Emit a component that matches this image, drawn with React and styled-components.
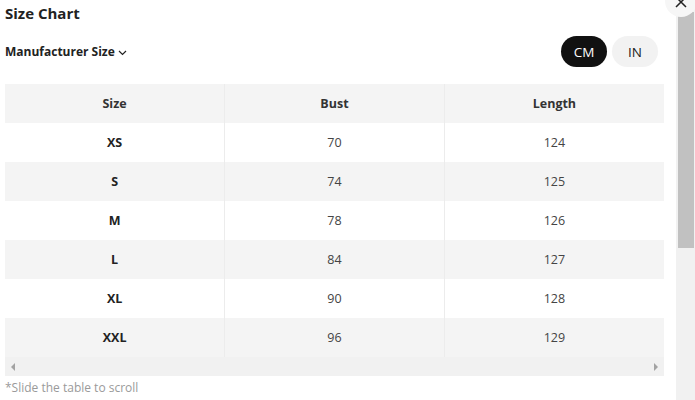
import React, { useState } from "react";
import styled, { createGlobalStyle } from "styled-components";

const GlobalStyle = createGlobalStyle`
  html, body {
    margin: 0;
    padding: 0;
    background: #fff;
  }
  body {
    font-family: "Open Sans", "Noto Sans", sans-serif;
    color: #222;
  }
`;

const rows = [
  { size: "XS", bust: 70, length: 124 },
  { size: "S", bust: 74, length: 125 },
  { size: "M", bust: 78, length: 126 },
  { size: "L", bust: 84, length: 127 },
  { size: "XL", bust: 90, length: 128 },
  { size: "XXL", bust: 96, length: 129 },
];

const App = () => {
  const [unit, setUnit] = useState("CM");

  return (
    <>
      <GlobalStyle />
      <Modal>
        <Body>
          <Title>Size Chart</Title>
          <Toolbar>
            <SizeSelect>
              Manufacturer Size
              <svg width="9" height="6" viewBox="0 0 9 6" fill="none">
                <path d="M1 1l3.5 3.5L8 1" stroke="#222" strokeWidth="1.2" />
              </svg>
            </SizeSelect>
            <Units>
              {["CM", "IN"].map((u) => (
                <UnitButton key={u} $active={unit === u} onClick={() => setUnit(u)}>
                  {u}
                </UnitButton>
              ))}
            </Units>
          </Toolbar>

          <Chart>
            <thead>
              <tr>
                <Head>Size</Head>
                <Head>Bust</Head>
                <Head>Length</Head>
              </tr>
            </thead>
            <tbody>
              {rows.map((r, i) => (
                <Row key={r.size} $striped={i % 2 === 1}>
                  <Cell $bold>{r.size}</Cell>
                  <Cell>{r.bust}</Cell>
                  <Cell>{r.length}</Cell>
                </Row>
              ))}
            </tbody>
          </Chart>

          <HScroll>
            <Arrow $dir="left" />
            <Arrow $dir="right" />
          </HScroll>

          <Note>*Slide the table to scroll</Note>
        </Body>

        <VScroll>
          <Thumb />
        </VScroll>

        <CloseButton aria-label="close">
          <svg width="12" height="12" viewBox="0 0 12 12">
            <path d="M1 1l10 10M11 1L1 11" stroke="#222" strokeWidth="1.5" />
          </svg>
        </CloseButton>
      </Modal>
    </>
  );
};

const Modal = styled.div`
  position: relative;
  width: 695px;
  height: 400px;
  overflow: hidden;
  display: flex;
`;

const Body = styled.div`
  width: 659px;
  padding-left: 5px;
  margin-right: 12px;
  display: flex;
  flex-direction: column;
`;

const Title = styled.h2`
  margin: 0;
  font-size: 15px;
  font-weight: 700;
  line-height: 26px;
  color: #222;
`;

const Toolbar = styled.div`
  margin-top: 10px;
  height: 31px;
  display: flex;
  align-items: center;
  justify-content: space-between;
  padding-right: 6px;
`;

const SizeSelect = styled.div`
  display: flex;
  align-items: center;
  gap: 3px;
  font-size: 12px;
  font-weight: 700;
  color: #222;
  cursor: pointer;
  svg {
    margin-top: 2px;
  }
`;

const Units = styled.div`
  display: flex;
  gap: 5px;
`;

const UnitButton = styled.button`
  width: 46px;
  height: 31px;
  border: none;
  border-radius: 16px;
  font-family: inherit;
  font-size: 13.5px;
  cursor: pointer;
  background: ${({ $active }) => ($active ? "#111" : "#f2f2f2")};
  color: ${({ $active }) => ($active ? "#fff" : "#222")};
`;

const Chart = styled.table`
  margin-top: 17px;
  width: 659px;
  border-collapse: collapse;
  table-layout: fixed;
  font-size: 12.5px;
`;

const Head = styled.th`
  height: 39px;
  padding: 0;
  background: #f4f4f4;
  font-weight: 700;
  color: #333;
  text-align: center;
  & + & {
    border-left: 1px solid #ececec;
  }
`;

const Row = styled.tr`
  background: ${({ $striped }) => ($striped ? "#f4f4f4" : "#fff")};
`;

const Cell = styled.td`
  height: 39px;
  padding: 0;
  text-align: center;
  font-weight: ${({ $bold }) => ($bold ? 700 : 400)};
  color: ${({ $bold }) => ($bold ? "#222" : "#444")};
  & + & {
    border-left: 1px solid #ececec;
  }
`;

const HScroll = styled.div`
  height: 19px;
  background: #f1f1f1;
  display: flex;
  align-items: center;
  justify-content: space-between;
  padding: 0 6px;
`;

const Arrow = styled.span`
  width: 0;
  height: 0;
  border-top: 4px solid transparent;
  border-bottom: 4px solid transparent;
  ${({ $dir }) =>
    $dir === "left"
      ? "border-right: 4px solid #a3a3a3;"
      : "border-left: 4px solid #a3a3a3;"}
`;

const Note = styled.div`
  margin-top: 3px;
  font-size: 12px;
  line-height: 18px;
  color: #9a9a9a;
`;

const VScroll = styled.div`
  width: 19px;
  height: 400px;
  background: #f1f1f1;
  display: flex;
  justify-content: center;
`;

const Thumb = styled.div`
  margin-top: 12px;
  width: 16px;
  height: 236px;
  background: #c1c1c1;
`;

const CloseButton = styled.button`
  position: absolute;
  top: -15px;
  left: 665px;
  width: 32px;
  height: 32px;
  border: none;
  border-radius: 50%;
  background: #f6f6f6;
  display: flex;
  align-items: flex-end;
  justify-content: center;
  padding: 0 0 9px;
  cursor: pointer;
`;

export default App;
